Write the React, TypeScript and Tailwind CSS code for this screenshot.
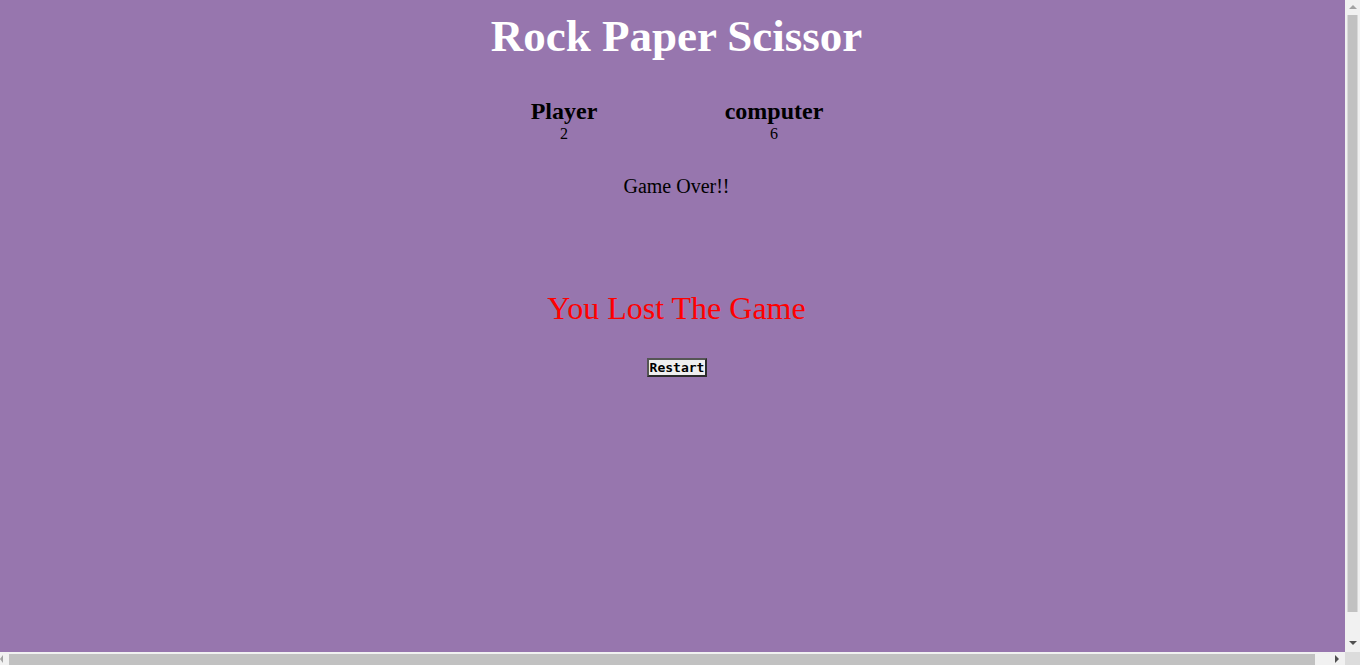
export default function App() {
  return (
    <div className="flex h-[665px] w-[1360px] flex-col overflow-hidden">
      <div className="flex min-h-0 flex-1">
        {/* page */}
        <main className="min-w-0 flex-1 overflow-hidden bg-[#9776ae] font-['Liberation_Serif',serif] text-black">
          <div className="w-[1353px]">
            <h1 className="pt-[12px] text-center text-[45px] font-bold leading-[49px] text-white">
              Rock Paper Scissor
            </h1>
            <div className="mt-[37px] flex justify-center pr-[15px]">
              <div className="w-[210px] text-center">
                <h2 className="text-[24px] font-bold leading-[27px]">Player</h2>
                <p className="text-[16px] leading-[18px]">2</p>
              </div>
              <div className="w-[210px] text-center">
                <h2 className="text-[24px] font-bold leading-[27px]">computer</h2>
                <p className="text-[16px] leading-[18px]">6</p>
              </div>
            </div>
            <p className="mt-[32px] text-center text-[20px] leading-[23px]">Game Over!!</p>
            <p className="mt-[92px] text-center text-[32px] leading-[36px] text-[#ff0000]">
              You Lost The Game
            </p>
            <div className="mt-[32px] flex justify-center pl-[1px]">
              <button className="border-2 border-[#2b2b2b] border-t-[#555] border-l-[#555] bg-[#efefef] px-[1px] font-['DejaVu_Sans_Mono',monospace] text-[13px] font-bold leading-[15px] text-black">
                Restart
              </button>
            </div>
          </div>
        </main>

        {/* vertical scrollbar */}
        <div className="flex w-[15px] flex-col items-center bg-[#f1f1f1]">
          <div className="mt-[5px] h-0 w-0 border-x-[4px] border-b-[4px] border-x-transparent border-b-[#a3a3a3]" />
          <div className="mt-[6px] h-[597px] w-[10px] translate-x-[-0.5px] bg-[#c1c1c1]" />
          <div className="flex-1" />
          <div className="mb-[7px] h-0 w-0 border-x-[4px] border-t-[4px] border-x-transparent border-t-[#505050]" />
        </div>
      </div>

      {/* horizontal scrollbar */}
      <div className="flex h-[13px] items-center bg-[#f1f1f1]">
        <div className="h-0 w-0 border-y-[4px] border-r-[3px] border-y-transparent border-r-[#a3a3a3]" />
        <div className="ml-[6px] mt-[2px] h-[11px] w-[1306px] self-start bg-[#c1c1c1]" />
        <div className="flex-1" />
        <div className="mr-[6px] h-0 w-0 border-y-[4px] border-l-[4px] border-y-transparent border-l-[#505050]" />
        <div className="h-full w-[15px] bg-[#dcdcdc]" />
      </div>
    </div>
  );
}
